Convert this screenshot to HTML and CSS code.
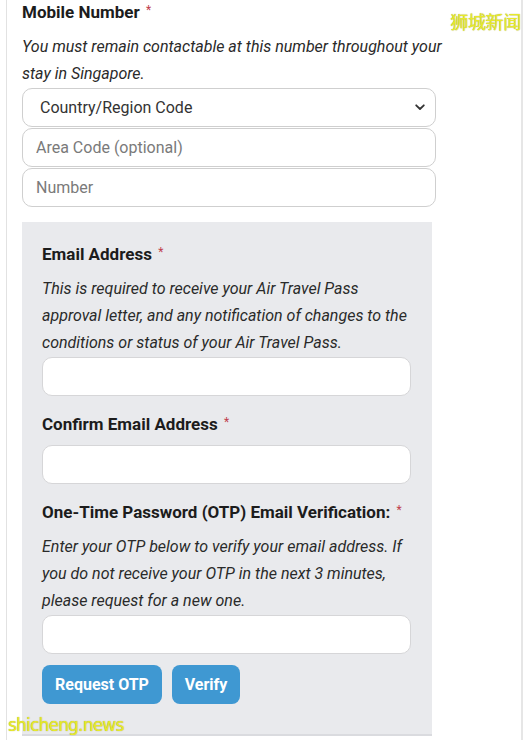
FILE: index.html
```html
<!DOCTYPE html>
<html>
<head>
<meta charset="utf-8">
<link rel="stylesheet" href="styles.css">
</head>
<body>
<div class="frame">
  <div class="field">
    <div class="label">Mobile Number <span class="req">*</span></div>
    <div class="help">You must remain contactable at this number throughout your stay in Singapore.</div>
    <div class="stack">
      <div class="select">
        <span>Country/Region Code</span>
        <svg class="chev" width="10" height="7" viewBox="0 0 10 7"><path d="M1.2 1.3 L5 5 L8.8 1.3" fill="none" stroke="#333" stroke-width="1.8" stroke-linecap="round" stroke-linejoin="round"/></svg>
      </div>
      <input class="input" placeholder="Area Code (optional)">
      <input class="input" placeholder="Number">
    </div>
  </div>

  <div class="panel">
    <div class="label">Email Address <span class="req">*</span></div>
    <div class="help">This is required to receive your Air Travel Pass approval letter, and any notification of changes to the conditions or status of your Air Travel Pass.</div>
    <input class="input">

    <div class="label spaced">Confirm Email Address <span class="req">*</span></div>
    <input class="input">

    <div class="label spaced">One-Time Password (OTP) Email Verification: <span class="req">*</span></div>
    <div class="help">Enter your OTP below to verify your email address. If you do not receive your OTP in the next 3 minutes, please request for a new one.</div>
    <input class="input">

    <div class="buttons">
      <button class="btn btn-otp">Request OTP</button>
      <button class="btn btn-verify">Verify</button>
    </div>
  </div>

  <div class="wm wm-cn">狮城新闻</div>
  <div class="wm wm-en">shicheng.news</div>
</div>
</body>
</html>
```

FILE: styles.css
```css
html, body {
  margin: 0;
  padding: 0;
  background: #ffffff;
}

body {
  font-family: Roboto, "Noto Sans", Arial, sans-serif;
  color: #1f1f1f;
}

.frame {
  position: relative;
  box-sizing: border-box;
  margin-left: 6px;
  width: 517px;
  height: 740px;
  border-left: 1px solid #e2e2e2;
  border-right: 2px solid #e6e6e6;
  padding-left: 15px;
  overflow: hidden;
}

.label {
  font-size: 17px;
  font-weight: 700;
  line-height: 20px;
  color: #1c1c1c;
  margin-bottom: 11px;
}

.label.spaced {
  margin-top: 16px;
}

.label + .input {
  margin-top: 1px;
}

.req {
  color: #c0404c;
  font-size: 12px;
  font-weight: 400;
  vertical-align: 4px;
  margin-left: 2px;
}

.help {
  font-size: 16px;
  font-style: italic;
  line-height: 27px;
  color: #2a2a2a;
  margin-bottom: 1px;
}

.field {
  width: 430px;
}

.stack {
  display: flex;
  flex-direction: column;
  gap: 1px;
  width: 414px;
}

.select,
.input {
  box-sizing: border-box;
  display: block;
  width: 100%;
  height: 39px;
  border: 1px solid #cfcfcf;
  border-radius: 10px;
  background: #ffffff;
  font-family: Roboto, "Noto Sans", Arial, sans-serif;
  font-size: 16px;
  margin: 0;
  outline: none;
}

.select {
  display: flex;
  align-items: center;
  justify-content: space-between;
  padding: 0 10px 0 17px;
  color: #333;
}

.input {
  padding: 0 13px;
  color: #333;
}

.input::placeholder {
  color: #7a7a7a;
}

.panel {
  margin-top: 15px;
  width: 410px;
  box-sizing: border-box;
  background: #e9eaed;
  padding: 20px 21px 30px 20px;
  border-bottom: 2px solid #dadbdf;
}

.panel .input {
  border-color: #d6d6d8;
}

.buttons {
  display: flex;
  gap: 10px;
  margin-top: 11px;
}

.btn {
  height: 39px;
  border: none;
  border-radius: 8px;
  background: #3f98d2;
  color: #ffffff;
  font-family: Roboto, "Noto Sans", Arial, sans-serif;
  font-size: 16px;
  font-weight: 700;
  padding: 0;
}

.btn-otp {
  width: 120px;
}

.btn-verify {
  width: 68px;
}

.wm {
  position: absolute;
  color: #e8ea2a;
  text-shadow: 0 0 1px #9a9a20;
}

.wm-cn {
  top: 10px;
  right: 0;
  font-family: "Noto Sans CJK SC", sans-serif;
  font-size: 18px;
  line-height: 22px;
  letter-spacing: -0.3px;
}

.wm-en {
  left: 1px;
  top: 713px;
  font-family: "DejaVu Sans", sans-serif;
  font-size: 17px;
  line-height: 24px;
  letter-spacing: -0.8px;
}
```
